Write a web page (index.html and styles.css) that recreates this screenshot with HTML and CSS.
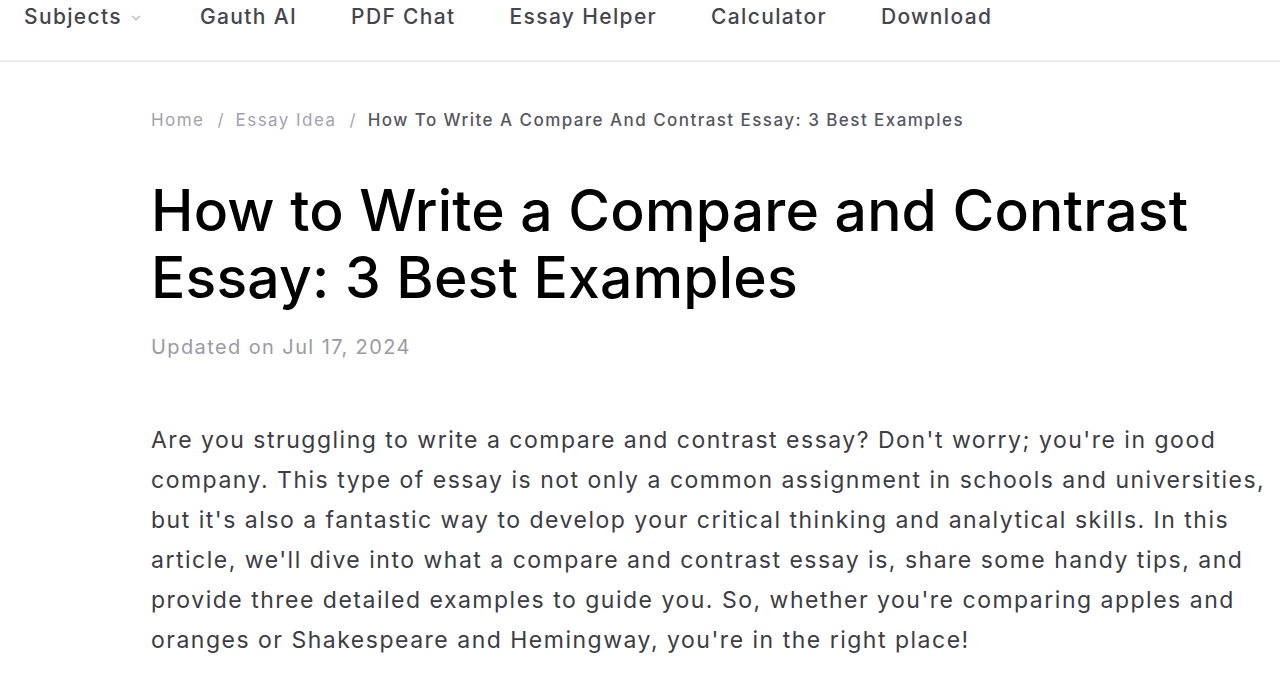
FILE: index.html
```html
<!DOCTYPE html>
<html lang="en">
<head>
<meta charset="utf-8">
<title>How to Write a Compare and Contrast Essay</title>
<link rel="stylesheet" href="styles.css">
</head>
<body>
<header class="topbar">
  <nav class="nav">
    <a class="nav-item nav-drop" href="#">Subjects <svg class="chev" width="10" height="6" viewBox="0 0 10 6"><path d="M1 1l4 4 4-4" fill="none" stroke="#b8b8c0" stroke-width="1.2"/></svg></a>
    <a class="nav-item" href="#">Gauth AI</a>
    <a class="nav-item" href="#">PDF Chat</a>
    <a class="nav-item" href="#">Essay Helper</a>
    <a class="nav-item" href="#">Calculator</a>
    <a class="nav-item" href="#">Download</a>
  </nav>
</header>
<main class="article">
  <div class="crumbs">
    <a href="#" class="crumb">Home</a><span class="sep">/</span>
    <a href="#" class="crumb">Essay Idea</a><span class="sep">/</span>
    <span class="crumb current">How To Write A Compare And Contrast Essay: 3 Best Examples</span>
  </div>
  <h1 class="title">How to Write a Compare and Contrast Essay: 3 Best Examples</h1>
  <div class="date">Updated on Jul 17, 2024</div>
  <p class="lead">Are you struggling to write a compare and contrast essay? Don't worry; you're in good company. This type of essay is not only a common assignment in schools and universities, but it's also a fantastic way to develop your critical thinking and analytical skills. In this article, we'll dive into what a compare and contrast essay is, share some handy tips, and provide three detailed examples to guide you. So, whether you're comparing apples and oranges or Shakespeare and Hemingway, you're in the right place!</p>
</main>
</body>
</html>
```
FILE: styles.css
```css
html, body { margin: 0; padding: 0; background: #fff; }
body { font-family: Inter, "Noto Sans", sans-serif; color: #222; width: 1280px; overflow: hidden; }
a { text-decoration: none; color: inherit; }
.topbar { height: 60px; border-bottom: 2px solid #ececf1; }
.nav { display: flex; align-items: center; height: 33px; padding-left: 24px; gap: 54px; }
.nav-item { font-size: 21px; font-weight: 500; letter-spacing: 1.35px; color: #45454d; display: flex; align-items: center; line-height: 32px; padding-top: 1px; }
.nav-drop { margin-right: 5px; }
.chev { margin-left: 9px; margin-top: 2px; }
.article { padding-left: 151px; width: 1125px; }
.crumbs { margin-top: 46px; font-size: 17px; letter-spacing: 1.45px; color: #a2a2ad; display: flex; align-items: center; height: 24px; line-height: 24px; }
.sep { margin: 0 12px 0 13px; color: #a6a6b0; letter-spacing: 0; }
.current { color: #56565f; font-weight: 500; }
.title { margin: 45px 0 0; font-size: 57px; line-height: 67px; font-weight: 500; color: #000; letter-spacing: 0.2px; }
.date { margin-top: 22px; font-size: 20px; line-height: 28px; letter-spacing: 1.4px; color: #9a9aa4; }
.lead { margin: 59px 0 0; font-size: 23px; line-height: 40px; letter-spacing: 1.5px; color: #3c3c44; }
```
